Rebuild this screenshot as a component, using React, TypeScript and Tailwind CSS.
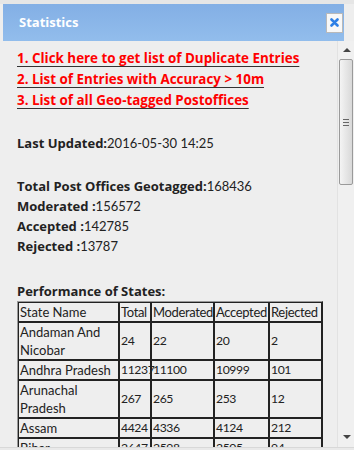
const rows = [
  { state: "Andaman And Nicobar", total: "24", moderated: "22", accepted: "20", rejected: "2" },
  { state: "Andhra Pradesh", total: "11237", moderated: "11100", accepted: "10999", rejected: "101" },
  { state: "Arunachal Pradesh", total: "267", moderated: "265", accepted: "253", rejected: "12" },
  { state: "Assam", total: "4424", moderated: "4336", accepted: "4124", rejected: "212" },
  { state: "Bihar", total: "2647", moderated: "2598", accepted: "2505", rejected: "94" },
];

const links = [
  "1. Click here to get list of Duplicate Entries",
  "2. List of Entries with Accuracy > 10m",
  "3. List of all Geo-tagged Postoffices",
];

const cell = "border border-[#222] pl-[1px] pr-0 align-middle whitespace-normal";
const head = "tracking-[-0.35px] whitespace-nowrap font-normal";
const num = "text-[12.2px] tracking-[-0.4px] whitespace-nowrap";
const boldFont = "font-['Open_Sans',sans-serif] font-bold";

function Scrollbar() {
  return (
    <div className="relative h-full w-[17px] shrink-0 border-l border-[#e2e2e2] bg-[#f0f0f0]">
      <div className="absolute left-[5px] top-[7px] h-0 w-0 border-x-[4px] border-b-[4px] border-x-transparent border-b-[#444]" />
      <div className="absolute left-[1px] top-[18px] flex h-[126px] w-[14px] flex-col items-center justify-center gap-[2px] rounded-[2px] border border-[#9a9a9a] bg-gradient-to-r from-[#f4f4f4] to-[#d9d9d9]">
        <div className="h-px w-[6px] bg-[#666]" />
        <div className="h-px w-[6px] bg-[#666]" />
        <div className="h-px w-[6px] bg-[#666]" />
      </div>
      <div className="absolute bottom-[8px] left-[5px] h-0 w-0 border-x-[4px] border-t-[4px] border-x-transparent border-t-[#444]" />
    </div>
  );
}

export default function App() {
  return (
    <div
      className="flex h-[450px] w-[354px] flex-col overflow-hidden bg-[#eeeeee] text-[#222]"
      style={{ fontFamily: "Lato, 'Open Sans', sans-serif" }}
    >
      <div className="h-[4px] shrink-0 bg-[#e6e6e6]" />
      <div className="ml-[3px] flex h-[37px] w-[341px] shrink-0 items-center justify-between bg-gradient-to-b from-[#83afe5] to-[#92bdec] pl-[16px] pr-[1px]">
        <span className={`text-[13px] text-white ${boldFont}`}>Statistics</span>
        <button className="flex h-[20px] w-[17px] items-center justify-center border border-[#b9b9b9] bg-[#f8f8f8]">
          <svg width="9" height="9" viewBox="0 0 9 9">
            <path d="M1.5 1.5 L7.5 7.5 M7.5 1.5 L1.5 7.5" stroke="#2e80e6" strokeWidth="2.6" strokeLinecap="round" />
          </svg>
        </button>
      </div>
      <div className="flex min-h-0 flex-1">
        <div className="min-w-0 flex-1 overflow-hidden pl-[17px] pt-[7px] text-[13px] leading-[20px]">
          <div className="flex flex-col">
            {links.map((l) => (
              <a
                key={l}
                href="#"
                className={`w-fit text-[13.4px] leading-[21px] text-[#ff0000] underline decoration-[#333] underline-offset-[3px] ${boldFont}`}
              >
                {l}
              </a>
            ))}
          </div>
          <p className="mt-[22px]">
            <b className={boldFont}>Last Updated:</b>2016-05-30 14:25
          </p>
          <div className="mt-[23px]">
            <p>
              <b className={boldFont}>Total Post Offices Geotagged:</b>168436
            </p>
            <p>
              <b className={boldFont}>Moderated :</b>156572
            </p>
            <p>
              <b className={boldFont}>Accepted :</b>142785
            </p>
            <p>
              <b className={boldFont}>Rejected :</b>13787
            </p>
          </div>
          <p className={`mt-[25px] ${boldFont}`}>Performance of States:</p>
          <table className="w-[304px] table-fixed border-separate border-spacing-0 border border-t-[#999] border-l-[#999] border-r-[#222] border-b-[#222] text-left text-[13px] leading-[18px]">
            <colgroup>
              <col className="w-[101px]" />
              <col className="w-[32px]" />
              <col className="w-[63px]" />
              <col className="w-[55px]" />
              <col className="w-[53px]" />
            </colgroup>
            <thead>
              <tr>
                <th className={`${cell} font-normal`}>State Name</th>
                <th className={`${cell} ${head}`}>Total</th>
                <th className={`${cell} ${head}`}>Moderated</th>
                <th className={`${cell} ${head}`}>Accepted</th>
                <th className={`${cell} ${head}`}>Rejected</th>
              </tr>
            </thead>
            <tbody>
              {rows.map((r) => (
                <tr key={r.state}>
                  <td className={cell}>{r.state}</td>
                  <td className={`${cell} ${num}`}>{r.total}</td>
                  <td className={`${cell} ${num}`}>{r.moderated}</td>
                  <td className={`${cell} ${num}`}>{r.accepted}</td>
                  <td className={`${cell} ${num}`}>{r.rejected}</td>
                </tr>
              ))}
            </tbody>
          </table>
        </div>
        <Scrollbar />
      </div>
      <div className="h-[3px] shrink-0 border-t border-[#d8d8d8] bg-[#e9e9e9]" />
    </div>
  );
}
